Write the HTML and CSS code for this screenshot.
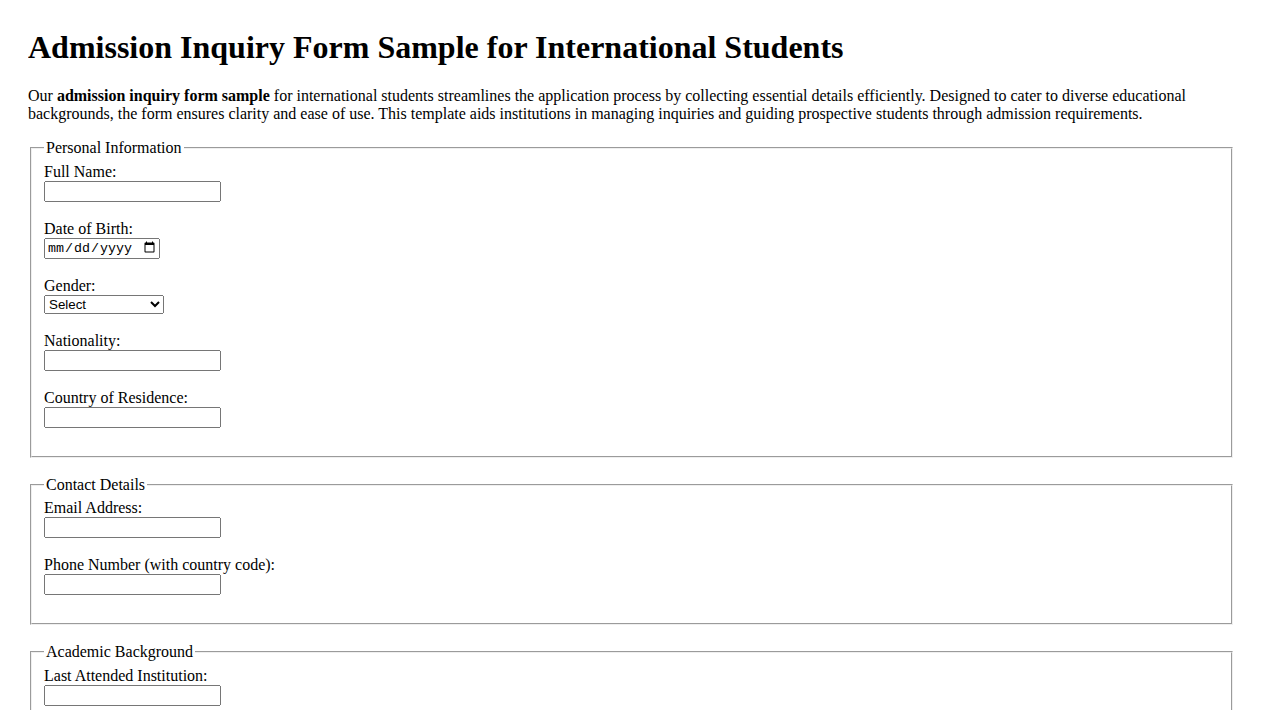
FILE: index.html
```html
<!DOCTYPE html>
<html>
<head>
<meta charset="utf-8">
<title>Admission Inquiry Form Sample for International Students</title>
<link rel="stylesheet" href="styles.css">
</head>
<body>
<h1 class="title">Admission Inquiry Form Sample for International Students</h1>
<p class="intro">Our <strong>admission inquiry form sample</strong> for international students streamlines the application process by collecting essential details efficiently. Designed to cater to diverse educational backgrounds, the form ensures clarity and ease of use. This template aids institutions in managing inquiries and guiding prospective students through admission requirements.</p>
<form class="inquiry">
<fieldset class="section">
<legend>Personal Information</legend>
<label for="fullname">Full Name:</label><br>
<input class="field" type="text" id="fullname" name="fullname"><br><br>
<label for="dob">Date of Birth:</label><br>
<input class="date" type="date" id="dob" name="dob"><br><br>
<label for="gender">Gender:</label><br>
<select id="gender" name="gender" class="gender">
<option>Select</option>
<option>Male</option>
<option>Female</option>
<option>Other</option>
</select><br><br>
<label for="nationality">Nationality:</label><br>
<input class="field" type="text" id="nationality" name="nationality"><br><br>
<label for="residence">Country of Residence:</label><br>
<input class="field" type="text" id="residence" name="residence"><br><br>
</fieldset>
<fieldset class="section">
<legend>Contact Details</legend>
<label for="email">Email Address:</label><br>
<input class="field" type="email" id="email" name="email"><br><br>
<label for="phone">Phone Number (with country code):</label><br>
<input class="field" type="tel" id="phone" name="phone"><br><br>
</fieldset>
<fieldset class="section">
<legend>Academic Background</legend>
<label for="institution">Last Attended Institution:</label><br>
<input class="field" type="text" id="institution" name="institution"><br><br>
<label for="qualification">Highest Qualification:</label><br>
<input class="field" type="text" id="qualification" name="qualification"><br><br>
<label for="year">Year of Graduation:</label><br>
<input class="field" type="number" id="year" name="year"><br><br>
</fieldset>
</form>
</body>
</html>
```
FILE: styles.css
```css
body {
  margin: 29px 28px 28px;
  font-family: "Liberation Serif", "Times New Roman", serif;
  font-size: 16px;
  color: #000;
  background: #fff;
}
.title {
  font-size: 32px;
  margin: 0 0 21px;
}
.intro {
  margin: 16px 0;
}
.section {
  margin: 0 2px 18px;
}
.field,
.date,
.gender {
  font-family: "Liberation Sans", Arial, sans-serif;
  font-size: 13.333px;
  box-sizing: border-box;
}
.field {
  width: 177px;
  height: 21px;
}
.date {
  width: 116px;
  height: 21px;
  font-family: "Liberation Mono", "Courier New", monospace;
}
.gender {
  width: 120px;
  height: 19px;
}
```
